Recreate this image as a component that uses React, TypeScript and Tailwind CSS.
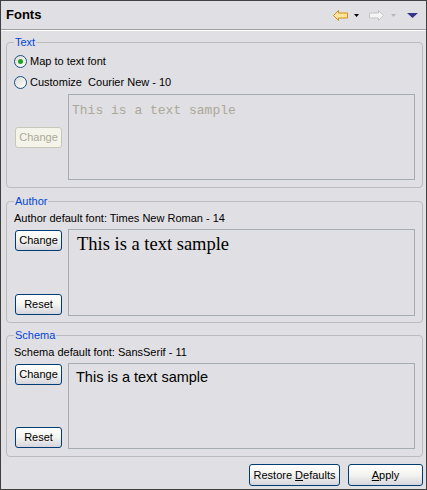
import type { ReactNode } from 'react';

const ui = { fontFamily: '"Liberation Sans", Arial, sans-serif' };

function XpButton({ children, disabled, className = '' }: { children: ReactNode; disabled?: boolean; className?: string }) {
  if (disabled) {
    return (
      <button
        disabled
        className={`h-[21px] rounded-[3px] border border-[#c9c7ba] bg-[#f5f4ea] text-[11px] leading-none text-[#aca899] ${className}`}
      >
        {children}
      </button>
    );
  }
  return (
    <button
      className={`h-[21px] rounded-[3px] border border-[#003c74] bg-gradient-to-b from-white via-[#f3f3ef] to-[#d6d5dc] text-[11px] leading-none text-black ${className}`}
    >
      {children}
    </button>
  );
}

function Radio({ checked, label }: { checked?: boolean; label: string }) {
  return (
    <label className="flex h-[13px] items-center gap-[3px] whitespace-pre text-[11px] leading-none text-black">
      <span className="flex h-[13px] w-[13px] items-center justify-center rounded-full border border-[#1c5180] bg-gradient-to-br from-[#dcdcd7] to-white">
        {checked && <span className="h-[5px] w-[5px] rounded-full bg-[#21a121]" />}
      </span>
      {label}
    </label>
  );
}

function Group({ title, children, className = '' }: { title: string; children: ReactNode; className?: string }) {
  return (
    <fieldset className={`ml-[5px] mr-[3px] rounded-[4px] border border-[#bcbcbc] px-[7px] ${className}`}>
      <legend className="px-[1px] text-[11px] leading-[13px] text-[#0046d5]">{title}</legend>
      {children}
    </fieldset>
  );
}

function Sample({ children, className = '' }: { children: ReactNode; className?: string }) {
  return <div className={`flex-1 border border-[#a5acb2] ${className}`}>{children}</div>;
}

function Triangle({ color, w, h }: { color: string; w: number; h: number }) {
  return (
    <svg width={w} height={h} viewBox={`0 0 ${w} ${h}`}>
      <polygon points={`0,0 ${w},0 ${w / 2},${h}`} fill={color} />
    </svg>
  );
}

export default function App() {
  return (
    <div className="h-[490px] w-[427px] border border-[#404040] bg-[#e0dfe3]" style={ui}>
      {/* Header */}
      <div className="flex h-[28px] items-center justify-between pl-[5px] pr-[8px]">
        <span className="text-[13px] font-bold text-black">Fonts</span>
        <div className="flex items-center">
          <svg width="15" height="11" viewBox="0 0 15 11" className="mt-[1px]">
            <path d="M0.5 5.5 L5.5 0.5 V3 H14.5 V8 H5.5 V10.5 Z" fill="#fde59b" stroke="#d08e1c" strokeLinejoin="round" />
          </svg>
          <span className="ml-[6px]">
            <Triangle color="#000" w={5} h={3} />
          </span>
          <svg width="15" height="11" viewBox="0 0 15 11" className="ml-[10px] mt-[1px]">
            <path d="M14.5 5.5 L9.5 0.5 V3 H0.5 V8 H9.5 V10.5 Z" fill="#f4f4f4" stroke="#c4c4c4" strokeLinejoin="round" />
          </svg>
          <span className="ml-[7px]">
            <Triangle color="#b8b8b8" w={5} h={3} />
          </span>
          <span className="ml-[11px]">
            <Triangle color="#35358a" w={11} h={5} />
          </span>
        </div>
      </div>
      <div className="border-t border-[#a0a0a0] border-b border-b-white" />

      {/* Text */}
      <Group title="Text" className="mt-[5px] pb-[7px]">
        <div className="mt-[6px] flex flex-col gap-[8px]">
          <Radio checked label="Map to text font" />
          <Radio label="Customize  Courier New - 10" />
        </div>
        <div className="mt-[5px] flex items-center gap-[6px]">
          <XpButton disabled className="ml-[1px] w-[47px]">Change</XpButton>
          <Sample className="h-[86px] pl-[3px] pt-[2px]">
            <span className="text-[13px] leading-[16px] text-[#aca899]" style={{ fontFamily: '"Liberation Mono", "Courier New", monospace' }}>
              This is a text sample
            </span>
          </Sample>
        </div>
      </Group>

      {/* Author */}
      <Group title="Author" className="mt-[7px] pb-[6px]">
        <div className="mt-[4px] text-[11px] leading-[13px] text-black">Author default font: Times New Roman - 14</div>
        <div className="mt-[4px] flex h-[87px] gap-[6px]">
          <div className="ml-[1px] flex flex-col justify-between py-[1px]">
            <XpButton className="w-[47px]">Change</XpButton>
            <XpButton className="w-[47px]">Reset</XpButton>
          </div>
          <Sample className="pl-[8px] pt-[1px]">
            <span className="text-[18.5px] text-black" style={{ fontFamily: '"Liberation Serif", "Times New Roman", serif' }}>
              This is a text sample
            </span>
          </Sample>
        </div>
      </Group>

      {/* Schema */}
      <Group title="Schema" className="mt-[6px] pb-[7px]">
        <div className="mt-[4px] text-[11px] leading-[13px] text-black">Schema default font: SansSerif - 11</div>
        <div className="mt-[4px] flex h-[86px] gap-[6px]">
          <div className="ml-[1px] flex flex-col justify-between py-[1px]">
            <XpButton className="w-[47px]">Change</XpButton>
            <XpButton className="w-[47px]">Reset</XpButton>
          </div>
          <Sample className="pl-[7px] pt-[1px]">
            <span className="text-[14.5px] leading-[20px] text-black">This is a text sample</span>
          </Sample>
        </div>
      </Group>

      {/* Footer buttons */}
      <div className="mt-[7px] flex justify-end gap-[8px] pr-[3px]">
        <XpButton className="h-[22px] w-[91px]">
          Restore <span className="underline">D</span>efaults
        </XpButton>
        <XpButton className="h-[22px] w-[75px]">
          <span className="underline">A</span>pply
        </XpButton>
      </div>
    </div>
  );
}
